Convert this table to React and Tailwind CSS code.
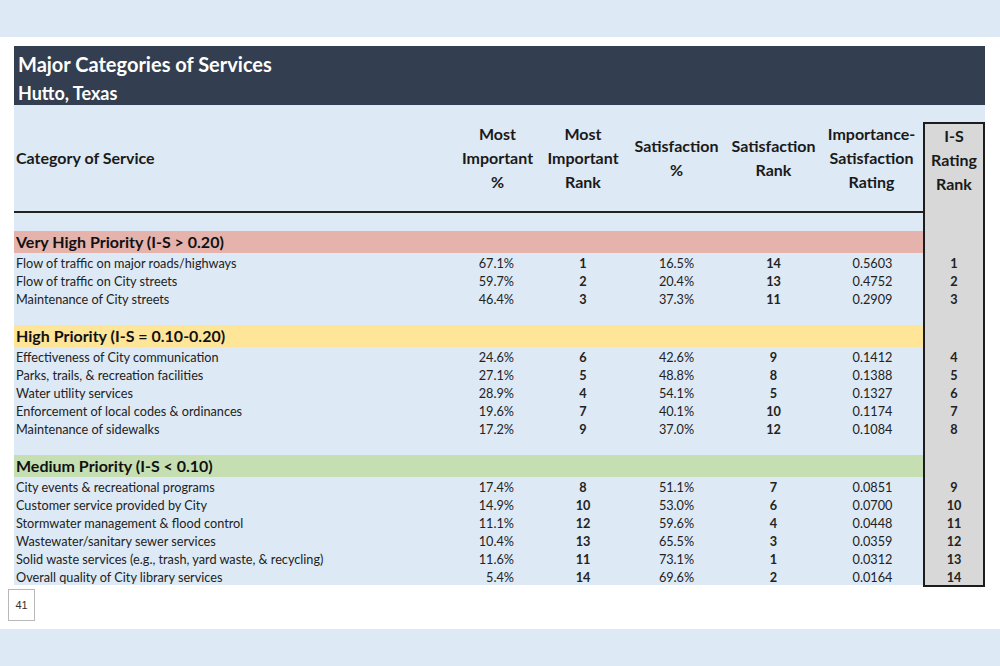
import React from "react";

const font = { fontFamily: "Lato, 'Open Sans', sans-serif" };

const groups = [
  {
    title: "Very High Priority (I-S > 0.20)",
    band: "bg-[#e6b3ac]",
    rows: [
      ["Flow of traffic on major roads/highways", "67.1%", "1", "16.5%", "14", "0.5603", "1"],
      ["Flow of traffic on City streets", "59.7%", "2", "20.4%", "13", "0.4752", "2"],
      ["Maintenance of City streets", "46.4%", "3", "37.3%", "11", "0.2909", "3"],
    ],
  },
  {
    title: "High Priority (I-S = 0.10-0.20)",
    band: "bg-[#ffe598]",
    rows: [
      ["Effectiveness of City communication", "24.6%", "6", "42.6%", "9", "0.1412", "4"],
      ["Parks, trails, & recreation facilities", "27.1%", "5", "48.8%", "8", "0.1388", "5"],
      ["Water utility services", "28.9%", "4", "54.1%", "5", "0.1327", "6"],
      ["Enforcement of local codes & ordinances", "19.6%", "7", "40.1%", "10", "0.1174", "7"],
      ["Maintenance of sidewalks", "17.2%", "9", "37.0%", "12", "0.1084", "8"],
    ],
  },
  {
    title: "Medium Priority (I-S < 0.10)",
    band: "bg-[#c5dfb3]",
    rows: [
      ["City events & recreational programs", "17.4%", "8", "51.1%", "7", "0.0851", "9"],
      ["Customer service provided by City", "14.9%", "10", "53.0%", "6", "0.0700", "10"],
      ["Stormwater management & flood control", "11.1%", "12", "59.6%", "4", "0.0448", "11"],
      ["Wastewater/sanitary sewer services", "10.4%", "13", "65.5%", "3", "0.0359", "12"],
      ["Solid waste services (e.g., trash, yard waste, & recycling)", "11.6%", "11", "73.1%", "1", "0.0312", "13"],
      ["Overall quality of City library services", "5.4%", "14", "69.6%", "2", "0.0164", "14"],
    ],
  },
];

const RankCell = ({ children, last }) => (
  <div
    className={`w-[62px] text-center bg-[#d8d8d8] border-x-2 border-[#1c1c1c] font-bold ${
      last ? "border-b-2" : ""
    }`}
  >
    {children}
  </div>
);

const Spacer = () => (
  <div className="flex h-[18px]">
    <div className="w-[909px] bg-[#dde9f5]" />
    <RankCell />
  </div>
);

const Band = ({ title, band }) => (
  <div className="flex h-[22px]">
    <div className={`w-[909px] ${band} pl-[2px] text-[16px] font-bold leading-[22px] text-[#111]`}>
      {title}
    </div>
    <RankCell />
  </div>
);

const Row = ({ r, last }) => (
  <div className="flex h-[18px] text-[12.7px] leading-[16px] text-[#222]">
    <div className="w-[441px] bg-[#dde9f5] pl-[2px] pt-[2px] whitespace-nowrap">{r[0]}</div>
    <div className="w-[85px] bg-[#dde9f5] text-right pr-[26px] pt-[2px]">{r[1]}</div>
    <div className="w-[86px] bg-[#dde9f5] text-center font-bold pt-[2px]">{r[2]}</div>
    <div className="w-[101px] bg-[#dde9f5] text-center pt-[2px]">{r[3]}</div>
    <div className="w-[93px] bg-[#dde9f5] text-center font-bold pt-[2px]">{r[4]}</div>
    <div className="w-[103px] bg-[#dde9f5] text-center pl-[2px] pt-[2px]">{r[5]}</div>
    <div className="pt-0">
      <RankCell last={last}>
        <div className="pt-[2px] h-[18px]">{r[6]}</div>
      </RankCell>
    </div>
  </div>
);

const HeadCell = ({ w, children, left }) => (
  <div
    className={`${w} flex items-center ${
      left ? "justify-start pl-[2px]" : "justify-center text-center"
    } border-b-2 border-[#222]`}
  >
    <div>{children}</div>
  </div>
);

export default function App() {
  return (
    <div className="w-[1000px] h-[666px] flex flex-col bg-white" style={font}>
      <div className="h-[37px] bg-[#dde9f5]" />
      <div className="flex-1 pt-[9px] px-[14px]">
        <div className="w-[971px]">
          <div className="h-[59px] overflow-hidden bg-[#333f50] text-white font-bold pl-[4px] pt-[4px]">
            <div className="text-[20px] leading-[28px]">Major Categories of Services</div>
            <div className="text-[18px] leading-[30px]">Hutto, Texas</div>
          </div>
          <div className="flex h-[108px] bg-[#dde9f5] text-[16px] leading-[24px] font-bold text-[#1a1a1a]">
            <HeadCell w="w-[441px]" left>
              Category of Service
            </HeadCell>
            <HeadCell w="w-[85px]">
              Most
              <br />
              Important
              <br />%
            </HeadCell>
            <HeadCell w="w-[86px]">
              Most
              <br />
              Important
              <br />
              Rank
            </HeadCell>
            <HeadCell w="w-[101px]">
              Satisfaction
              <br />%
            </HeadCell>
            <HeadCell w="w-[93px]">
              Satisfaction
              <br />
              Rank
            </HeadCell>
            <HeadCell w="w-[103px]">
              Importance-
              <br />
              Satisfaction
              <br />
              Rating
            </HeadCell>
            <div className="w-[62px] pt-[17px]">
              <div className="h-full bg-[#d8d8d8] border-t-2 border-x-2 border-[#1c1c1c] text-center">
                I-S
                <br />
                Rating
                <br />
                Rank
              </div>
            </div>
          </div>
          {groups.map((g, gi) => (
            <React.Fragment key={g.title}>
              <Spacer />
              <Band title={g.title} band={g.band} />
              {g.rows.map((r, ri) => (
                <Row
                  key={r[0]}
                  r={r}
                  last={gi === groups.length - 1 && ri === g.rows.length - 1}
                />
              ))}
            </React.Fragment>
          ))}
        </div>
        <div
          className="mt-[4px] -ml-[6px] w-[27px] h-[32px] border border-[#b8b8b8] flex items-center justify-center text-[11px] text-[#333]"
          style={{ fontFamily: "'Liberation Sans', Arial, sans-serif" }}
        >
          41
        </div>
      </div>
      <div className="h-[37px] bg-[#dde9f5]" />
    </div>
  );
}
